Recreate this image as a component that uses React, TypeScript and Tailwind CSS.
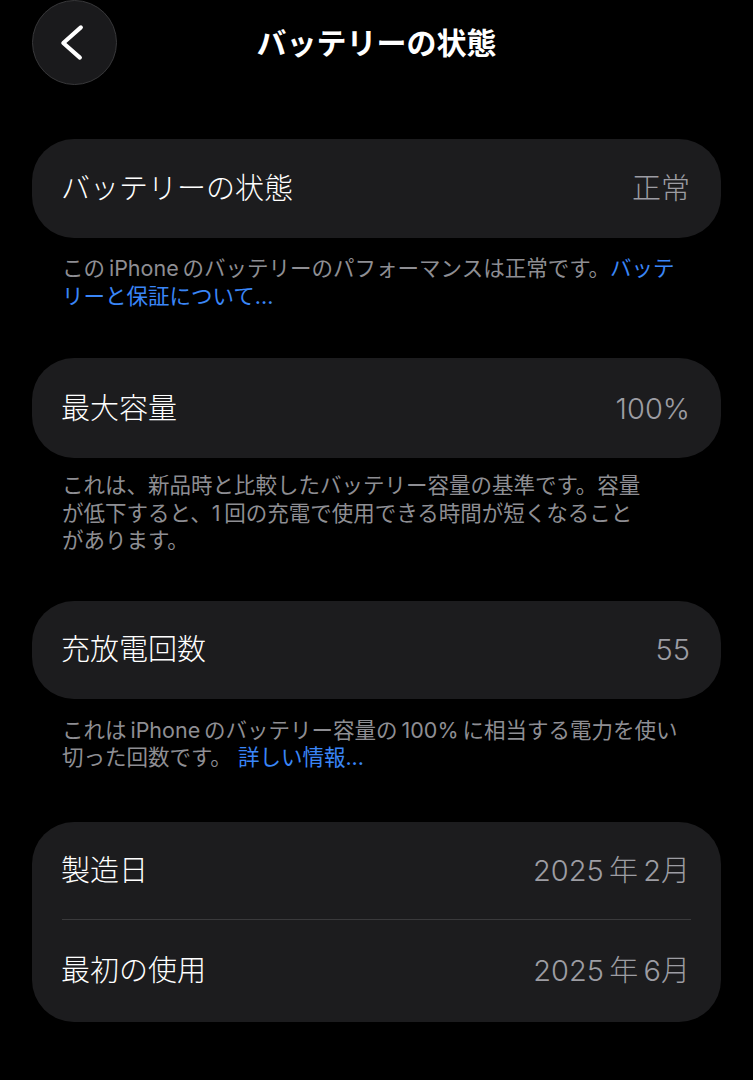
import React from "react";

const FONT = "font-['Inter','Noto_Sans_CJK_JP',sans-serif]";
const T = "\u2009";

function Row({ label, value }: { label: string; value: string }) {
  return (
    <div className="flex h-full items-center justify-between pl-[29px] pr-[31px]">
      <span className="text-[29px] font-light leading-none text-white">{label}</span>
      <span className="text-[29px] font-light leading-none text-[#9d9da3]">{value}</span>
    </div>
  );
}

function Card({ label, value, h }: { label: string; value: string; h: string }) {
  return (
    <div className={`rounded-[42px] bg-[#1c1c1e] ${h}`}>
      <Row label={label} value={value} />
    </div>
  );
}

function Link({ children }: { children: React.ReactNode }) {
  return <span className="text-[#3a86f7]">{children}</span>;
}

function Footer({ lines, mt, mb }: { lines: React.ReactNode[]; mt: string; mb: string }) {
  return (
    <div
      className={`pl-[30px] text-[21.5px] font-normal leading-[27.5px] text-[#8e8e93] ${mt} ${mb}`}
    >
      {lines.map((l, i) => (
        <div key={i} className="whitespace-nowrap">
          {l}
        </div>
      ))}
    </div>
  );
}

export default function App() {
  return (
    <div className={`min-h-[1080px] w-full bg-black ${FONT} px-[32px]`}>
      {/* header */}
      <div className="grid h-[84px] grid-cols-[1fr_auto_1fr] items-center">
        <div className="flex items-center">
          <button className="flex h-[85px] w-[85px] items-center justify-center rounded-full border border-[#38383a] bg-[#1a1a1c]">
            <svg width="85" height="85" viewBox="0 0 85 85" fill="none">
              <polyline
                points="49,27 31,43 48,58"
                stroke="white"
                strokeWidth="4.2"
                strokeLinecap="round"
                strokeLinejoin="round"
              />
            </svg>
          </button>
        </div>
        <div className="text-[30px] font-bold leading-none text-white">バッテリーの状態</div>
        <div />
      </div>

      <div className="mt-[55px]">
        <Card label="バッテリーの状態" value="正常" h="h-[99px]" />
        <Footer
          mt="mt-[17px]"
          mb="mb-[48px]"
          lines={[
            <>
              この{T}iPhone{T}のバッテリーのパフォーマンスは正常です。<Link>バッテ</Link>
            </>,
            <Link>リーと保証について...</Link>,
          ]}
        />

        <Card label="最大容量" value="100%" h="h-[100px]" />
        <Footer
          mt="mt-[14px]"
          mb="mb-[46px]"
          lines={[
            <>これは、新品時と比較したバッテリー容量の基準です。容量</>,
            <>が低下すると、1{T}回の充電で使用できる時間が短くなること</>,
            <>があります。</>,
          ]}
        />

        <Card label="充放電回数" value="55" h="h-[98px]" />
        <Footer
          mt="mt-[18px]"
          mb="mb-[50px]"
          lines={[
            <>
              これは{T}iPhone{T}のバッテリー容量の{T}100%{T}に相当する電力を使い
            </>,
            <>
              切った回数です。 <Link>詳しい情報...</Link>
            </>,
          ]}
        />

        <div className="rounded-[42px] bg-[#1c1c1e]">
          <div className="h-[97px]">
            <Row label="製造日" value={`2025${T}年${T}2月`} />
          </div>
          <div className="mx-[30px] h-px bg-[#3a3a3c]" />
          <div className="h-[102px]">
            <Row label="最初の使用" value={`2025${T}年${T}6月`} />
          </div>
        </div>
      </div>
    </div>
  );
}
